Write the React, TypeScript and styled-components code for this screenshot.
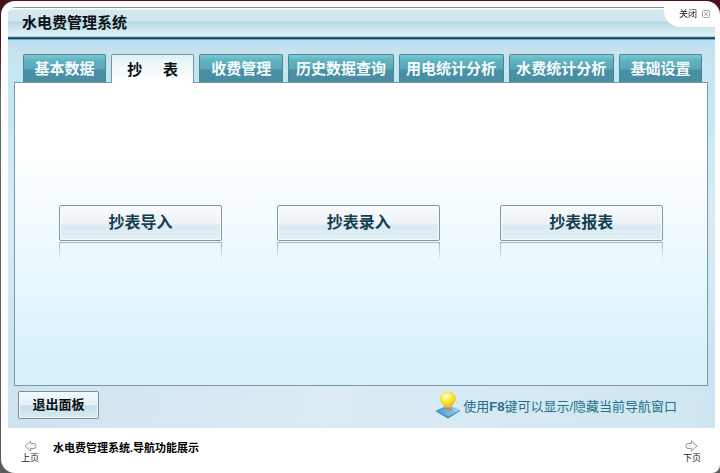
import React from "react";
import styled, { createGlobalStyle } from "styled-components";

const GlobalStyle = createGlobalStyle`
  *, *::before, *::after { box-sizing: border-box; }
  body {
    margin: 0;
    font-family: "Liberation Sans", "Noto Sans CJK SC", sans-serif;
    background: linear-gradient(#4a121b 0, #4a121b 40px, #6b6b6e 100px, #5a5a5c 100%);
  }
  button { font-family: inherit; cursor: pointer; }
`;

const Window = styled.div`
  display: flex;
  flex-direction: column;
  min-height: 100vh;
  padding: 1px 0 0 1px;
`;

const Frame = styled.div`
  flex: 1;
  display: flex;
  flex-direction: column;
  padding: 6px 5px 0 7px;
  border-radius: 14px 14px 8px 14px;
  background: #fff;
`;

const Shell = styled.main`
  flex: 1;
  display: flex;
  flex-direction: column;
  border-radius: 8px 0 0 0;
  overflow: hidden;
  background: linear-gradient(#b5dff2 0, #b5dff2 34px, #c8e2ec 44px, #c3e6f3 70px, #d6edf6 50%, #c6e1ed 100%);
`;

const Header = styled.header`
  display: flex;
  align-items: center;
  justify-content: space-between;
  height: 33px;
  padding-left: 14px;
  border-bottom: 1px solid #6fb2d0;
  background: linear-gradient(
    #84929a 0, #84929a 1px, #fff 1px, #fff 2px,
    #d6e7ee 3px, #cfe5ed 14px, #b3d7e3 15px, #cbe3ec 20px, #dff2f7 29px,
    #6ba0af 30px, #173b4d 31px, #173b4d 32px
  );
`;

const Title = styled.h1`
  margin: 0;
  font-size: 15px;
  line-height: 20px;
  font-weight: 700;
  color: #0a1014;
`;

const CloseButton = styled.button`
  align-self: flex-start;
  display: flex;
  align-items: center;
  gap: 5px;
  height: 20px;
  padding: 0 5px 6px 15px;
  border: 0;
  border-radius: 0 0 0 16px;
  background: #fff;
  color: #222;
  font-size: 9px;
  line-height: 14px;
`;

const Tabs = styled.nav`
  display: grid;
  grid-template-columns: 83fr 83fr 84fr 105fr 105fr 105fr 83fr;
  gap: 5px;
  padding: 14px 13px 0 15px;
`;

const Tab = styled.button<{ $active?: boolean }>`
  height: ${(p) => (p.$active ? 29 : 28)}px;
  margin-bottom: ${(p) => (p.$active ? -1 : 0)}px;
  z-index: ${(p) => (p.$active ? 1 : 0)};
  padding: 1px 0 0;
  border: 1px solid ${(p) => (p.$active ? "#6d99a5" : "#4b8796")};
  border-bottom: 0;
  border-radius: 2px 2px 0 0;
  background: ${(p) =>
    p.$active
      ? "linear-gradient(#dff0f7, #f4fafc 50%, #fff)"
      : "linear-gradient(#7fc9d3 0, #5fb5c2 5px, #5aa5b4 14px, #4990a4 15px, #4a8da3 100%)"};
  color: ${(p) => (p.$active ? "#0a0f12" : "#f4fbfc")};
  font-size: 15px;
  line-height: 20px;
  font-weight: 700;
  white-space: pre;
`;

const Panel = styled.section`
  flex: 1;
  display: grid;
  grid-template-columns: 218fr 222fr 163fr;
  align-items: center;
  margin: 0 7px 0 6px;
  padding: 24px 44px 26px;
  border: 1px solid #7a98a3;
  background: linear-gradient(#fff 0, #fff 22%, #eaf8fe 60%, #d8f2fd 90%);
`;

const Action = styled.div`
  width: 163px;
`;

const ActionButton = styled.button`
  display: block;
  width: 100%;
  height: 36px;
  padding: 0;
  border: 1px solid #7f999d;
  border-radius: 2px;
  background: linear-gradient(#f8fafc, #edf3f9 18px, #dbe9f1 19px, #e1eff6);
  box-shadow: inset 0 0 0 1px #f7fcfe;
  color: #143f4f;
  font-size: 16px;
  line-height: 20px;
  font-weight: 700;
`;

const Reflection = styled.div`
  height: 19px;
  margin-top: 1px;
  border: 1px solid #9db8be;
  border-bottom: 0;
  background: linear-gradient(#e9f5fa, #eff9fd);
  mask-image: linear-gradient(#000, transparent);
`;

const Footer = styled.footer`
  display: flex;
  align-items: center;
  justify-content: space-between;
  height: 42px;
  padding: 0 38px 4px 10px;
  background: linear-gradient(100deg, #cfe3ee, #dcebf4 45%, #cfe6f2);
`;

const ExitButton = styled.button`
  width: 81px;
  height: 28px;
  padding: 0;
  border: 1px solid #72909a;
  border-radius: 2px;
  background: linear-gradient(#f3f9fb, #e4f1f6 13px, #c6dfe9 14px, #d8eaf1);
  box-shadow: inset 0 0 0 1px #f2fafc;
  color: #0a0f12;
  font-size: 13px;
  line-height: 18px;
  font-weight: 700;
`;

const Hint = styled.p`
  display: flex;
  align-items: center;
  gap: 2px;
  margin: 0;
  color: #22708a;
  font-size: 13px;
  line-height: 18px;
`;

const HintText = styled.span`
  padding-top: 4px;
`;

const Pager = styled.div`
  display: flex;
  align-items: flex-start;
  gap: 14px;
  height: 45px;
  padding: 12px 14px 0 13px;
`;

const PageButton = styled.button`
  display: flex;
  flex-direction: column;
  align-items: center;
  gap: 1px;
  padding: 0;
  border: 0;
  background: none;
  color: #222;
  font-size: 9px;
  line-height: 11px;
`;

const Caption = styled.p`
  flex: 1;
  margin: 0;
  color: #000;
  font-size: 11px;
  line-height: 16px;
  font-weight: 700;
`;

const CloseIcon = () => (
  <svg width="8" height="8" viewBox="0 0 8 8" fill="none" stroke="#a5a5a5" aria-hidden="true">
    <rect x=".5" y=".5" width="7" height="7" rx="1" />
    <path d="M2.2 2.2 5.8 5.8M5.8 2.2 2.2 5.8" />
  </svg>
);

const ArrowIcon = ({ right }: { right?: boolean }) => (
  <svg width="13" height="12" viewBox="0 0 13 12" aria-hidden="true">
    <path
      d={
        right
          ? "M6.5 1 12 6 6.5 11V8.5H3Q1 8.5 1 6.5V5.5Q1 3.5 3 3.5H6.5Z"
          : "M6.5 1 1 6 6.5 11V8.5H10Q12 8.5 12 6.5V5.5Q12 3.5 10 3.5H6.5Z"
      }
      fill="#f6f6f6"
      stroke="#999"
      strokeLinejoin="round"
    />
  </svg>
);

const BulbIcon = () => (
  <svg width="26" height="28" viewBox="0 0 26 28" aria-hidden="true">
    <defs>
      <radialGradient id="bulb-glass" cx=".38" cy=".3" r=".75">
        <stop offset="0" stopColor="#fffde0" />
        <stop offset=".45" stopColor="#fbee3c" />
        <stop offset="1" stopColor="#e9bd12" />
      </radialGradient>
      <linearGradient id="bulb-base" x2="1">
        <stop offset="0" stopColor="#3f97d6" />
        <stop offset="1" stopColor="#9bd3f3" />
      </linearGradient>
    </defs>
    <path d="M1 19.5 13 14l12 5-12 8Z" fill="url(#bulb-base)" />
    <path d="M1 19.5 13 26l12-7v1l-12 7.5L1 20.5Z" fill="#3484c0" />
    <path
      d="M13 1C8.500 1 5.500 4.200 5.500 8c0 3.200 2.300 4.700 3.500 7.500h8c1.200-2.800 3.500-4.300 3.500-7.500 0-3.800-3-7-7.500-7Z"
      fill="url(#bulb-glass)"
      stroke="#e2c33a"
      strokeWidth=".5"
    />
    <path d="M9.3 15.5h7.400v4.200Q13 23 9.300 19.700Z" fill="#b9b48f" />
    <path d="M9.3 17.3h7.400M9.600 19.200h6.800" stroke="#7c8071" strokeWidth=".8" />
  </svg>
);

const tabs = [
  "基本数据",
  "抄     表",
  "收费管理",
  "历史数据查询",
  "用电统计分析",
  "水费统计分析",
  "基础设置",
];

const actions = ["抄表导入", "抄表录入", "抄表报表"];

export default function App() {
  return (
    <Window>
      <GlobalStyle />
      <Frame>
        <Shell>
          <Header>
            <Title>水电费管理系统</Title>
            <CloseButton type="button">
              关闭
              <CloseIcon />
            </CloseButton>
          </Header>
          <Tabs>
            {tabs.map((label, i) => (
              <Tab key={label} type="button" $active={i === 1} aria-current={i === 1 ? "page" : undefined}>
                {label}
              </Tab>
            ))}
          </Tabs>
          <Panel>
            {actions.map((label) => (
              <Action key={label}>
                <ActionButton type="button">{label}</ActionButton>
                <Reflection />
              </Action>
            ))}
          </Panel>
          <Footer>
            <ExitButton type="button">退出面板</ExitButton>
            <Hint>
              <BulbIcon />
              <HintText>
                使用<b>F8</b>键可以显示/隐藏当前导航窗口
              </HintText>
            </Hint>
          </Footer>
        </Shell>
        <Pager>
          <PageButton type="button">
            <ArrowIcon />
            上页
          </PageButton>
          <Caption>水电费管理系统.导航功能展示</Caption>
          <PageButton type="button">
            <ArrowIcon right />
            下页
          </PageButton>
        </Pager>
      </Frame>
    </Window>
  );
}
